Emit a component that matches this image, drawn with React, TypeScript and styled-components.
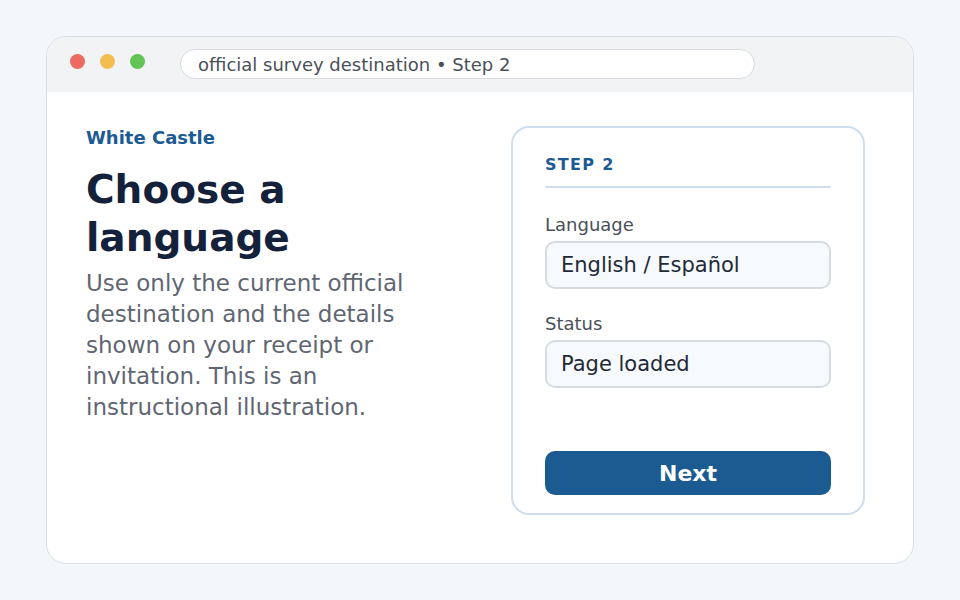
import styled, { createGlobalStyle } from "styled-components";

const GlobalStyle = createGlobalStyle`
  html, body {
    margin: 0;
    padding: 0;
    background: #f3f7fb;
    font-family: "DejaVu Sans", "Liberation Sans", sans-serif;
  }
`;

const Page = styled.div`
  width: 960px;
  height: 600px;
  box-sizing: border-box;
  padding: 36px 46px;
`;

const Window = styled.div`
  height: 528px;
  box-sizing: border-box;
  background: #ffffff;
  border: 1px solid #d9dee3;
  border-radius: 20px;
  overflow: hidden;
  display: flex;
  flex-direction: column;
`;

const TitleBar = styled.div`
  height: 55px;
  box-sizing: border-box;
  flex-shrink: 0;
  background: #f1f3f5;
  display: flex;
  align-items: flex-start;
  padding: 12px 0 0 23px;
  gap: 15px;
`;

const Dot = styled.span<{ $color: string }>`
  width: 15px;
  height: 15px;
  margin-top: 5px;
  border-radius: 50%;
  background: ${(p) => p.$color};
`;

const Address = styled.div`
  margin-left: 20px;
  width: 575px;
  height: 30px;
  box-sizing: border-box;
  border: 1px solid #d6dade;
  border-radius: 15px;
  background: #ffffff;
  display: flex;
  align-items: center;
  padding-left: 17px;
  font-size: 18px;
  color: #4a5058;
`;

const Body = styled.div`
  flex: 1;
  display: grid;
  grid-template-columns: 1fr 354px;
  padding: 34px 48px 48px 39px;
`;

const Intro = styled.section`
  max-width: 360px;
  padding-top: 1px;
`;

const Brand = styled.div`
  font-size: 18px;
  line-height: 21px;
  font-weight: 700;
  color: #1c5a92;
  margin-bottom: 18px;
`;

const Title = styled.h1`
  margin: 0 0 6px;
  font-size: 39px;
  line-height: 48px;
  font-weight: 700;
  color: #14213a;
`;

const Lead = styled.p`
  margin: 0;
  font-size: 23px;
  line-height: 31px;
  color: #5f6672;
`;

const Card = styled.section`
  border: 2px solid #cfdeee;
  border-radius: 18px;
  padding: 27px 32px 18px;
  display: flex;
  flex-direction: column;
`;

const Step = styled.div`
  font-size: 16px;
  line-height: 19px;
  font-weight: 700;
  letter-spacing: 1.3px;
  color: #1c5a92;
  padding-bottom: 12px;
  border-bottom: 2px solid #cfdeee;
  margin-bottom: 26px;
`;

const Label = styled.div`
  font-size: 18px;
  line-height: 21px;
  color: #4a5058;
  margin-bottom: 6px;
`;

const Field = styled.div`
  height: 48px;
  box-sizing: border-box;
  border: 2px solid #d6dbe1;
  border-radius: 10px;
  background: #f7fafc;
  display: flex;
  align-items: center;
  padding-left: 14px;
  font-size: 21px;
  color: #1f2937;
  margin-bottom: 24px;
`;

const Button = styled.button`
  margin-top: auto;
  height: 44px;
  border: none;
  border-radius: 10px;
  background: #1c5a92;
  color: #ffffff;
  font-family: inherit;
  font-size: 22px;
  font-weight: 700;
`;

export default function App() {
  return (
    <>
      <GlobalStyle />
      <Page>
        <Window>
          <TitleBar>
            <Dot $color="#ec6a5f" />
            <Dot $color="#f3be4f" />
            <Dot $color="#61c454" />
            <Address>official survey destination • Step 2</Address>
          </TitleBar>
          <Body>
            <Intro>
              <Brand>White Castle</Brand>
              <Title>Choose a language</Title>
              <Lead>
                Use only the current official destination and the details shown on your receipt or invitation. This
                is an instructional illustration.
              </Lead>
            </Intro>
            <Card>
              <Step>STEP 2</Step>
              <Label>Language</Label>
              <Field>English / Español</Field>
              <Label>Status</Label>
              <Field>Page loaded</Field>
              <Button>Next</Button>
            </Card>
          </Body>
        </Window>
      </Page>
    </>
  );
}
